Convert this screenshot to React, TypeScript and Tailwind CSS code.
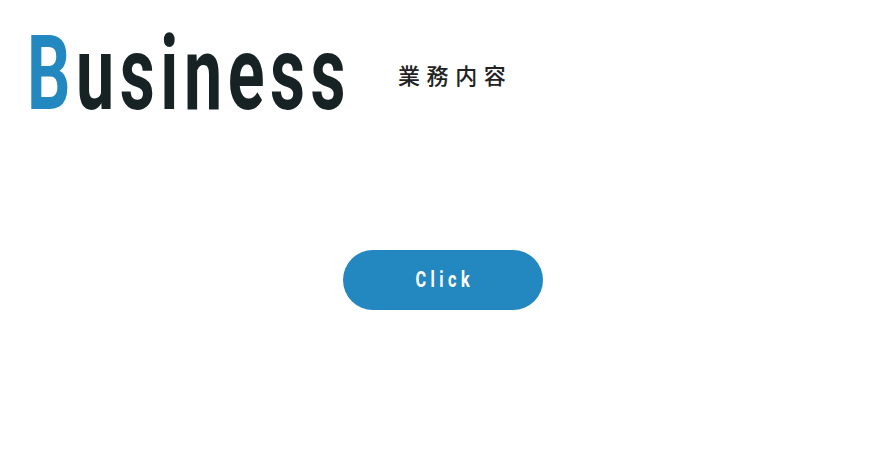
import React from "react";

export default function App() {
  return (
    <div className="w-[885px] h-[460px] bg-white relative overflow-hidden">
      <div className="flex items-start pt-[22px] pl-[27px]">
        <h1
          className="inline-block origin-left scale-x-[0.655] text-[104px] leading-none font-bold tracking-[8.5px] text-[#172224] w-[320px] whitespace-nowrap"
          style={{ fontFamily: "Roboto, 'Liberation Sans', sans-serif" }}
        >
          <span className="text-[#2387c0]">B</span>usiness
        </h1>
        <div
          className="mt-[41px] ml-[51px] text-[22px] font-medium tracking-[0.3em] text-[#222] leading-none"
          style={{ fontFamily: "'Noto Sans CJK JP', sans-serif" }}
        >
          業務内容
        </div>
      </div>
      <div className="flex justify-center mt-[124px]">
        <button className="w-[200px] h-[60px] rounded-full bg-[#2387c0] flex items-center justify-center">
          <span
            className="inline-block scale-x-[0.74] text-[22px] font-bold text-white tracking-[6px] leading-none pl-[6px]"
            style={{ fontFamily: "Roboto, 'Liberation Sans', sans-serif" }}
          >
            Click
          </span>
        </button>
      </div>
    </div>
  );
}
